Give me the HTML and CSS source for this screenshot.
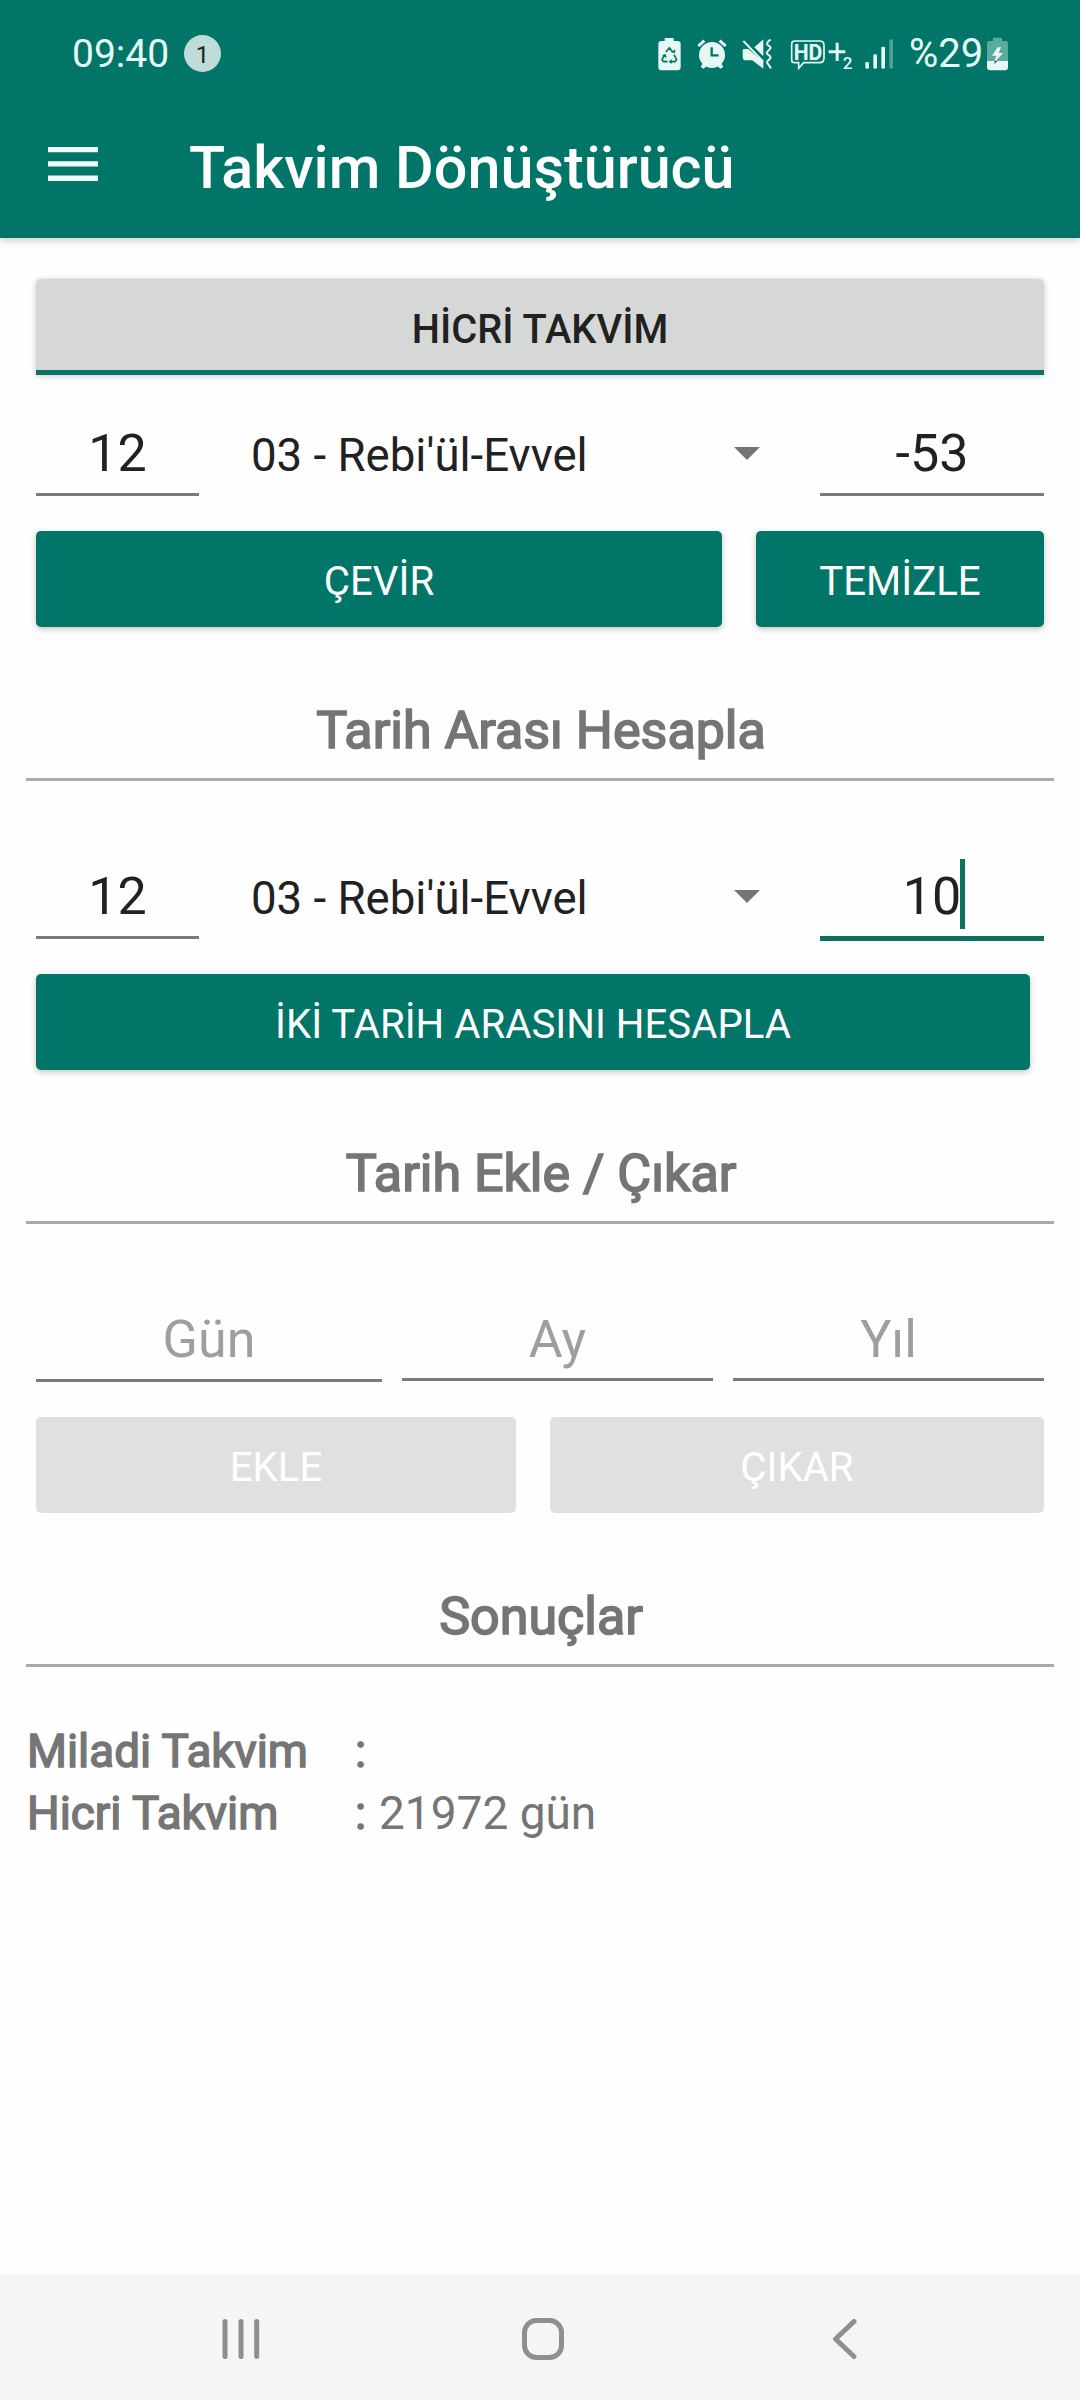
FILE: index.html
```html
<!DOCTYPE html>
<html lang="tr">
<head>
<meta charset="utf-8">
<title>Takvim Dönüştürücü</title>
<link rel="stylesheet" href="styles.css">
</head>
<body>
<div class="screen">
  <header class="header">
    <div class="status">
      <span class="clock">09:40</span>
      <span class="count">1</span>
      <svg class="status-icons" viewBox="80 40 720 120" fill="#e6f7f4">
        <!-- battery saver -->
        <path fill-rule="evenodd" d="M106 52h27v9h12q9 0 9 9v69q0 10-9 10H96q-9 0-9-10V70q0-9 9-9h10z"/>
        <g fill="none" stroke="#00756a" stroke-width="5" stroke-linejoin="round">
          <path d="M110 94l10-13 10 13M134 102l8 15-5 6h-13M115 123h-12l-5-6 8-15"/>
        </g>
        <path fill="#00756a" d="M126 95l11 3 1-12zM127 115v15l-9-7zM98 105l11-5 3 12z"/>
        <!-- alarm -->
        <circle cx="248" cy="103" r="39"/>
        <path d="M214 139l8-14 12 9-11 10zM282 139l-8-14-12 9 11 10z"/>
        <g fill="none" stroke="#e6f7f4" stroke-width="9"><path d="M207 76l18-16M271 60l18 16"/></g>
        <path d="M247 80v24h21" fill="none" stroke="#00756a" stroke-width="7"/>
        <!-- muted with vibration -->
        <path d="M402 56v51l-27-27zM340 89q0-4 4-4h13l45 39v20l-33-25h-19q-10 0-10-11z"/>
        <path d="M342 61l60 62" fill="none" stroke="#e6f7f4" stroke-width="6"/>
        <path d="M424 57q-15 9-9 16l7 5q4 4-1 8l-6 6q-5 5 0 9l7 6q4 4-1 8l-6 6q-4 5 1 9l9 13" fill="none" stroke="#e6f7f4" stroke-width="6"/>
        <!-- HD voice, second line -->
        <path d="M495 61h76q13 0 13 13v38q0 14-13 14h-48l-15 17v-17h-13q-8 0-8-9V71q0-10 8-10z" fill="none" stroke="#e6f7f4" stroke-width="5"/>
        <text class="hd" x="493" y="118" textLength="86" lengthAdjust="spacingAndGlyphs">HD</text>
        <path d="M598 89h21V66h9v23h20v9h-20v23h-9V98h-21z"/>
        <text class="sim" x="640" y="146">2</text>
        <!-- signal -->
        <rect x="708" y="124" width="11" height="20" rx="4"/>
        <rect x="732" y="101" width="11" height="43" rx="4"/>
        <rect x="756" y="78" width="11" height="66" rx="4"/>
        <rect x="780" y="56" width="11" height="88" rx="4" opacity=".35"/>
      </svg>
      <span class="percent">%29</span>
      <svg class="battery" viewBox="1068 50 69 102">
        <path d="M1089 52h27v10h10q8 0 8 9v51h-63V71q0-9 8-9h10z" fill="#5aaaa0"/>
        <path d="M1071 122h63v19q0 9-9 9h-45q-9 0-9-9z" fill="#e6f7f4"/>
        <path d="M1103 81l-17 25h13l-7 22 27-30h-13l7-17z" fill="#e6f7f4"/>
        <path d="M1095 122h6l-8 9z" fill="#111"/>
      </svg>
    </div>
    <div class="appbar">
      <svg class="menu" viewBox="0 0 50 34" fill="#f2ffff"><path d="M0 0h50v5.3H0zM0 14.3h50v5.3H0zM0 28.6h50v5.4H0z"/></svg>
      <h1 class="title">Takvim Dönüştürücü</h1>
    </div>
  </header>

  <main class="content">
    <div class="tab">HİCRİ TAKVİM</div>
    <div class="row row-first">
      <div class="field day">12</div>
      <div class="spinner"><span>03 - Rebi'ül-Evvel</span><i class="arrow"></i></div>
      <div class="field year">-53</div>
    </div>
    <div class="buttons">
      <div class="button convert">ÇEVİR</div>
      <div class="button clear">TEMİZLE</div>
    </div>

    <h2 class="heading">Tarih Arası Hesapla</h2>
    <div class="row">
      <div class="field day">12</div>
      <div class="spinner"><span>03 - Rebi'ül-Evvel</span><i class="arrow"></i></div>
      <div class="field year focused"><span class="value">10<i class="caret"></i></span></div>
    </div>
    <div class="buttons">
      <div class="button between">İKİ TARİH ARASINI HESAPLA</div>
    </div>

    <h2 class="heading">Tarih Ekle / Çıkar</h2>
    <div class="row offsets">
      <div class="field hint wide">Gün</div>
      <div class="field hint short">Ay</div>
      <div class="field hint short">Yıl</div>
    </div>
    <div class="buttons">
      <div class="button disabled add">EKLE</div>
      <div class="button disabled subtract">ÇIKAR</div>
    </div>

    <h2 class="heading">Sonuçlar</h2>
    <div class="results">
      <b>Miladi Takvim</b><b>:</b><span></span>
      <b>Hicri Takvim</b><b>:</b><span>21972 gün</span>
    </div>
  </main>

  <nav class="navbar">
    <svg viewBox="0 0 42 42"><path d="M5 3.500v35M21 3.500v35M36.700 3.500v35"/></svg>
    <svg viewBox="0 0 42 42"><rect x="2.500" y="2.500" width="37" height="37" rx="12"/></svg>
    <svg viewBox="0 0 42 42"><path d="M31 3.500L12.500 21 31 38.500"/></svg>
  </nav>
</div>
</body>
</html>
```
FILE: styles.css
```css
* { box-sizing: border-box; }
body { margin: 0; background: #fefefe; font-family: Roboto, "Noto Sans", sans-serif; color: #212121; }
.screen { display: flex; flex-direction: column; width: 1080px; height: 2400px; }

.header { height: 238px; background: #007568; box-shadow: 0 2px 8px rgba(0, 0, 0, .22); }
.status { display: flex; align-items: center; height: 90px; padding: 17px 71px 0 72px; color: #e6fbf8; white-space: nowrap; }
.clock { font-size: 39px; width: 112px; }
.count { display: flex; align-items: center; justify-content: center; width: 37px; height: 37px; padding-top: 2px; border-radius: 50%; background: #c0dcd8; color: #222; font-size: 24px; }
.status-icons { width: 240px; height: 40px; margin-left: auto; }
.hd { font: 700 68px Roboto, sans-serif; }
.sim { font: 500 51px Roboto, sans-serif; }
.percent { width: 77px; margin-left: 13px; font-size: 40px; }
.battery { width: 23px; height: 34px; }
.appbar { display: flex; align-items: center; height: 148px; padding-left: 48px; }
.menu { width: 50px; height: 34px; margin-right: 91px; }
.title { margin: 0; padding-top: 6px; font-size: 59.3px; font-weight: 500; color: #fff; white-space: nowrap; }

.content { flex: 1; padding: 41px 26px 0; }
.tab { display: flex; align-items: center; justify-content: center; height: 96px; margin: 0 10px; padding-top: 10px; border-bottom: 5px solid #0c7365; border-radius: 5px 5px 0 0; background: #d6d8d7; box-shadow: 0 1px 6px rgba(0, 0, 0, .22); font-size: 39.8px; font-weight: 500; }
.row { display: flex; height: 83px; margin: 75px 10px 0; }
.row-first { margin-top: 38px; }
.field { display: flex; align-items: center; justify-content: center; height: 83px; border-bottom: 3px solid #7a7a7a; font-size: 52px; }
.day { width: 163px; }
.year { width: 224px; }
.focused { height: 85px; border-bottom: 5px solid #0e7063; }
.value { position: relative; }
.caret { position: absolute; left: 100%; top: -7px; width: 5px; height: 70px; margin-left: -1px; background: #0e7063; }
.spinner { display: flex; flex: 1; align-items: center; justify-content: space-between; height: 80px; padding: 4px 60px 0 52px; font-size: 45.6px; white-space: nowrap; }
.arrow { margin-bottom: 3px; border: 13px solid transparent; border-top-color: #757575; border-bottom: 0; }
.buttons { display: flex; justify-content: space-between; margin: 35px 10px 0; }
.button { display: flex; align-items: center; justify-content: center; height: 96px; padding-top: 5px; border-radius: 5px; background: #007568; box-shadow: 0 2px 6px rgba(0, 0, 0, .24); color: #fff; font-size: 40.2px; }
.convert { width: 686px; }
.clear { width: 288px; }
.between { width: 994px; }
.add { width: 480px; }
.subtract { width: 494px; }
.disabled { background: #e0e0e0; box-shadow: none; }

.heading { display: flex; align-items: center; justify-content: center; height: 97px; margin: 57px 0 0; padding: 0 0 2px 2px; border-bottom: 3px solid #aaa; color: #757575; font-size: 52px; font-weight: 400; -webkit-text-stroke: 1.7px #757575; }
.offsets { gap: 20px; }
.hint { color: #9e9e9e; }
.wide { width: 346px; }
.short { width: 311px; height: 82px; padding-top: 1px; }
.results { display: grid; grid-template-columns: 328px 24px 1fr; grid-auto-rows: 62px; align-items: center; margin-top: 53px; padding-left: 1px; color: #757575; font-size: 46px; }
.results b { font-size: 45.8px; font-weight: 400; -webkit-text-stroke: 1.5px #757575; }

.navbar { display: flex; justify-content: space-between; height: 126px; padding: 44px 215px 0 220px; background: #f5f5f5; }
.navbar svg { width: 42px; height: 42px; fill: none; stroke: #8f8f8f; stroke-width: 5; stroke-linecap: round; stroke-linejoin: round; }
```
